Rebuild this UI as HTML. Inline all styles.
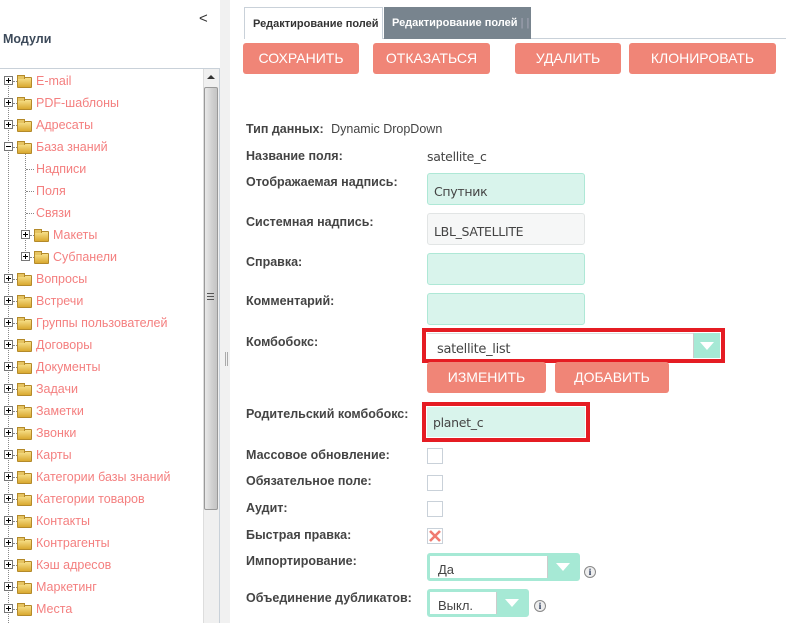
<!DOCTYPE html>
<html><head><meta charset="utf-8"><style>
*{margin:0;padding:0;box-sizing:border-box}
body{width:786px;height:623px;overflow:hidden;background:#fff;font-family:"Liberation Sans","DejaVu Sans",sans-serif;position:relative}
.a{position:absolute}
.ti{position:absolute;font-size:12.5px;color:#f47f7f;white-space:nowrap;line-height:14px}
.pb{position:absolute;width:9px;height:9px;border:1px solid #777;background:#fff}
.pb:before{content:"";position:absolute;left:1px;top:3px;width:5px;height:1px;background:#000}
.pb.p:after{content:"";position:absolute;left:3px;top:1px;width:1px;height:5px;background:#000}
.fd{position:absolute;width:15px;height:11px;background:linear-gradient(#f7e08a,#d9a930);border:1px solid #b48a2a;border-radius:1px}
.fd:before{content:"";position:absolute;left:-1px;top:-3px;width:6px;height:3px;background:#e6c462;border:1px solid #b48a2a;border-bottom:none}
.dh{position:absolute;height:1px;border-top:1px dotted #888}
.lb{position:absolute;left:246px;font-weight:bold;color:#444;font-family:"Liberation Sans",sans-serif;font-size:12.5px;white-space:nowrap}
.in{position:absolute;left:427px;width:158px;height:32px;background:#d9f4ec;border:1px solid #aee8d6;border-radius:3px;font-size:12.5px;color:#444;padding:10px 6px 0;font-family:"DejaVu Sans",sans-serif;letter-spacing:-0.3px}
.btn{position:absolute;background:#f08577;color:#fff;font-size:14px;text-align:center;border-radius:3px;line-height:31px}
.cb{position:absolute;left:427px;width:16px;height:16px;border:1px solid #c9d1d9;background:#fff}
.sel{position:absolute;background:#fff;border:3px solid #a6e9d5;border-radius:3px;font-size:13px;color:#444;padding:6px 8px}
.arr{position:absolute;top:0;right:0;bottom:0;background:#a6e9d5;border-left:1px solid #ccc}
.arr:after{content:"";position:absolute;left:50%;top:50%;margin:-4px 0 0 -7px;border-left:7px solid transparent;border-right:7px solid transparent;border-top:8px solid #fff}
.info{position:absolute;width:12px;height:12px;border-radius:50%;border:1px solid #888;background:#eee;font:bold 9px "Liberation Serif",serif;color:#235;text-align:center;line-height:10px}
</style></head><body>
<div class="a" style="left:220px;top:0;width:10px;height:623px;background:#f1f1f1"></div>
<div class="a" style="left:225px;top:352px;width:3px;height:14px;border-left:1px solid #aaa;border-right:1px solid #aaa"></div>
<div class="a" style="left:199px;top:10px;font-size:15px;color:#333">&lt;</div>
<div class="a" style="left:3px;top:32px;font-size:12.5px;font-weight:bold;color:#3d4a5a">Модули</div>
<div class="a" style="left:0;top:68px;width:220px;height:555px;border-top:1px solid #c9d1d9;border-right:1px solid #c9d1d9"></div>
<div class="a" style="left:203px;top:69px;width:16px;height:554px;background:#f0f0f0;border-left:1px solid #ddd"></div>
<div class="a" style="left:207px;top:75px;border-left:4px solid transparent;border-right:4px solid transparent;border-bottom:4px solid #333"></div>
<div class="a" style="left:204px;top:87px;width:14px;height:423px;background:linear-gradient(90deg,#e8e8e8,#d0d0d0 60%,#c4c4c4);border:1px solid #999;border-radius:2px"></div>
<div class="a" style="left:207px;top:293px;width:7px;height:7px;border-top:1px solid #555;border-bottom:1px solid #555"><div style="margin-top:2px;border-top:1px solid #555"></div></div>
<div class="a" style="left:8px;top:77px;height:546px;border-left:1px dotted #888"></div>
<div class="a" style="left:25px;top:153px;height:104px;border-left:1px dotted #888"></div>
<div id="tree"></div>
<script>
var items=[["E-mail",0,1],["PDF-шаблоны",0,1],["Адресаты",0,1],["База знаний",0,2],["Надписи",1,0],["Поля",1,0],["Связи",1,0],["Макеты",1,1],["Субпанели",1,1],["Вопросы",0,1],["Встречи",0,1],["Группы пользователей",0,1],["Договоры",0,1],["Документы",0,1],["Задачи",0,1],["Заметки",0,1],["Звонки",0,1],["Карты",0,1],["Категории базы знаний",0,1],["Категории товаров",0,1],["Контакты",0,1],["Контрагенты",0,1],["Кэш адресов",0,1],["Маркетинг",0,1],["Места",0,1]];
var h="";items.forEach(function(it,i){var y=81+i*22;var off=it[1]?17:0;
if(it[2]){h+='<div class="pb'+(it[2]==1?' p':'')+'" style="left:'+(4+off)+'px;top:'+(y-5)+'px"></div><div class="dh" style="left:'+(13+off)+'px;top:'+y+'px;width:4px"></div><div class="fd" style="left:'+(17+off)+'px;top:'+(y-4)+'px"></div><div class="ti" style="left:'+(36+off)+'px;top:'+(y-7)+'px">'+it[0]+'</div>';}
else{h+='<div class="dh" style="left:26px;top:'+y+'px;width:8px"></div><div class="ti" style="left:36px;top:'+(y-7)+'px">'+it[0]+'</div>';}});
document.getElementById("tree").innerHTML=h;
</script>
<div class="a" style="left:244px;top:38px;width:542px;height:1px;background:#c9d1d9"></div>
<div class="a" style="left:244px;top:7px;width:139px;height:32px;border:1px solid #c9d1d9;border-bottom:none;background:#fff;font-size:11px;font-weight:bold;color:#333;padding:10px 0 0 8px;white-space:nowrap">Редактирование полей</div>
<div class="a" style="left:384px;top:7px;width:147px;height:32px;background:#78848e;font-size:11px;font-weight:bold;color:#fff;padding:10px 0 0 8px;white-space:nowrap">Редактирование полей <span style="color:#aab;font-weight:normal">| |</span></div>
<div class="btn" style="left:243px;top:43px;width:116px">СОХРАНИТЬ</div>
<div class="btn" style="left:373px;top:43px;width:117px">ОТКАЗАТЬСЯ</div>
<div class="btn" style="left:515px;top:43px;width:106px">УДАЛИТЬ</div>
<div class="btn" style="left:629px;top:43px;width:147px">КЛОНИРОВАТЬ</div>
<div class="lb" style="top:122px">Тип данных: <span style="font-weight:normal;color:#444;margin-left:4px">Dynamic DropDown</span></div>
<div class="lb" style="top:149px">Название поля:</div>
<div class="a" style="left:427px;top:149px;font-size:12.5px;color:#444;font-family:'DejaVu Sans',sans-serif;letter-spacing:-0.3px">satellite_c</div>
<div class="lb" style="top:175px">Отображаемая надпись:</div>
<div class="in" style="top:173px">Спутник</div>
<div class="lb" style="top:215px">Системная надпись:</div>
<div class="in" style="top:213px;background:#f6f7f7;border-color:#e2e5e5">LBL_SATELLITE</div>
<div class="lb" style="top:255px">Справка:</div>
<div class="in" style="top:253px"></div>
<div class="lb" style="top:294px">Комментарий:</div>
<div class="in" style="top:293px"></div>
<div class="lb" style="top:335px">Комбобокс:</div>
<div class="a" style="left:422px;top:328px;width:303px;height:35px;border:4px solid #e51c23"></div>
<div class="a" style="left:427px;top:333px;width:293px;height:25px;background:#fff;border-top:1px solid #ddd;font-size:13px;color:#444;padding:8px 0 0 10px;font-family:'DejaVu Sans',sans-serif;letter-spacing:-0.3px">satellite_list</div>
<div class="arr" style="left:693px;top:333px;width:27px;height:25px;right:auto;bottom:auto"></div>
<div class="btn" style="left:427px;top:362px;width:119px;line-height:31px">ИЗМЕНИТЬ</div>
<div class="btn" style="left:555px;top:362px;width:114px;line-height:31px">ДОБАВИТЬ</div>
<div class="lb" style="top:407px">Родительский комбобокс:</div>
<div class="a" style="left:422px;top:402px;width:168px;height:40px;border:4px solid #e51c23"></div>
<div class="a" style="left:427px;top:407px;width:158px;height:30px;background:#d9f4ec;font-size:12.5px;color:#444;padding:8px 0 0 6px;font-family:'DejaVu Sans',sans-serif;letter-spacing:-0.3px">planet_c</div>
<div class="lb" style="top:448px">Массовое обновление:</div>
<div class="cb" style="top:448px"></div>
<div class="lb" style="top:474px">Обязательное поле:</div>
<div class="cb" style="top:475px"></div>
<div class="lb" style="top:501px">Аудит:</div>
<div class="cb" style="top:501px"></div>
<div class="lb" style="top:528px">Быстрая правка:</div>
<div class="cb" style="top:528px"><svg width="14" height="14" style="position:absolute;left:0;top:0"><path d="M2 2L12 12M12 2L2 12" stroke="#f07a70" stroke-width="2.6"/></svg></div>
<div class="lb" style="top:554px">Импортирование:</div>
<div class="sel" style="left:427px;top:553px;width:153px;height:28px">Да<div class="arr" style="width:30px"></div></div>
<div class="info" style="left:584px;top:566px">i</div>
<div class="lb" style="top:591px">Объединение дубликатов:</div>
<div class="sel" style="left:427px;top:589px;width:102px;height:28px">Выкл.<div class="arr" style="width:30px"></div></div>
<div class="info" style="left:534px;top:600px">i</div>
</body></html>
